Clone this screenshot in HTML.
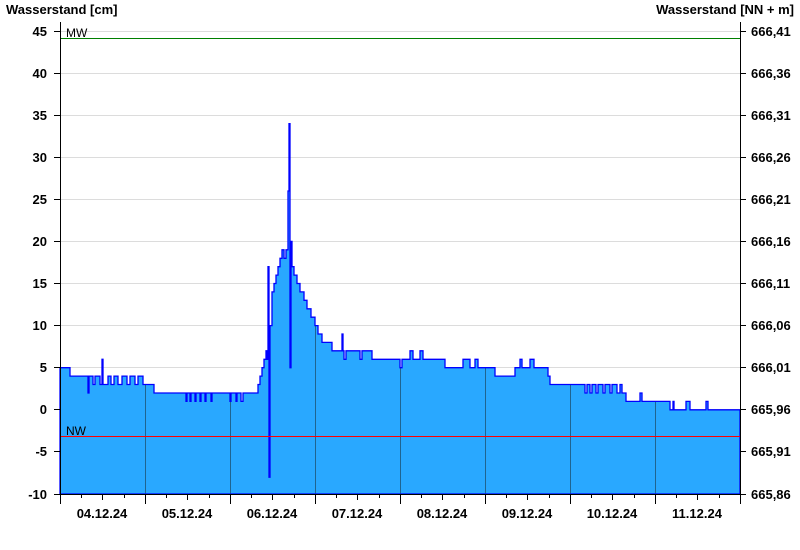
<!DOCTYPE html>
<html><head><meta charset="utf-8"><style>
html,body{margin:0;padding:0;background:#fff;width:800px;height:550px;overflow:hidden}
svg text{font-family:"Liberation Sans",Arial,sans-serif;font-weight:bold;font-size:13px;fill:#000}
</style></head><body>
<svg width="800" height="550" xmlns="http://www.w3.org/2000/svg">
<defs>
<clipPath id="c"><path id="dp" d="M60,494 V367.7 H70 V376.1 H88 V393 H89 V376.1 H93 V384.5 H95 V376.1 H100 V384.5 H102 V359.3 H103 V384.5 H108 V376.1 H111 V384.5 H114 V376.1 H118 V384.5 H122 V376.1 H127 V384.5 H130 V376.1 H135 V384.5 H138 V376.1 H143 V384.5 H154 V393 H186 V401.4 H187 V393 H190 V401.4 H191 V393 H195 V401.4 H196 V393 H200 V401.4 H201 V393 H205 V401.4 H206 V393 H211 V401.4 H212 V393 H230 V401.4 H231 V393 H236 V401.4 H237 V393 H241 V401.4 H243 V393 H258 V384.5 H260 V376.1 H262 V367.7 H264 V359.3 H266 V350.8 H267 V359.3 H268 V266.7 H269 V477.2 H270 V325.6 H272 V291.9 H274 V283.5 H276 V275.1 H278 V266.7 H280 V258.3 H282 V249.8 H284 V258.3 H286 V249.8 H288 V191 H289 V123.6 H290 V367.7 H291 V241.4 H292 V266.7 H294 V275.1 H297 V283.5 H300 V291.9 H304 V300.3 H307 V308.8 H311 V317.2 H315 V325.6 H318 V334 H322 V342.4 H332 V350.8 H342 V334 H343 V350.8 H344 V359.3 H346 V350.8 H360 V359.3 H362 V350.8 H372 V359.3 H400 V367.7 H402 V359.3 H410 V350.8 H413 V359.3 H420 V350.8 H423 V359.3 H445 V367.7 H463 V359.3 H470 V367.7 H475 V359.3 H478 V367.7 H495 V376.1 H515 V367.7 H520 V359.3 H522 V367.7 H530 V359.3 H534 V367.7 H548 V376.1 H550 V384.5 H585 V393 H587 V384.5 H590 V393 H592 V384.5 H596 V393 H598 V384.5 H603 V393 H605 V384.5 H610 V393 H612 V384.5 H617 V393 H620 V384.5 H622 V393 H626 V401.4 H638 V401.4 H640 V393 H642 V401.4 H670 V409.8 H673 V401.4 H674 V409.8 H686 V401.4 H690 V409.8 H706 V401.4 H708 V409.8 H740 V494 Z"/></clipPath>
</defs>
<text x="6" y="14">Wasserstand [cm]</text>
<text x="794" y="14" text-anchor="end">Wasserstand [NN + m]</text>
<g stroke="#dcdcdc" stroke-width="1">
<line x1="60" x2="740" y1="31.5" y2="31.5"/><line x1="60" x2="740" y1="73.5" y2="73.5"/><line x1="60" x2="740" y1="115.5" y2="115.5"/><line x1="60" x2="740" y1="157.5" y2="157.5"/><line x1="60" x2="740" y1="199.5" y2="199.5"/><line x1="60" x2="740" y1="241.5" y2="241.5"/><line x1="60" x2="740" y1="283.5" y2="283.5"/><line x1="60" x2="740" y1="325.5" y2="325.5"/><line x1="60" x2="740" y1="367.5" y2="367.5"/><line x1="60" x2="740" y1="409.5" y2="409.5"/><line x1="60" x2="740" y1="451.5" y2="451.5"/>
</g>
<use href="#dp" fill="#29a8ff"/>
<g clip-path="url(#c)" stroke="#1f6490" stroke-width="1">
<line x1="145.5" x2="145.5" y1="0" y2="494"/><line x1="230.5" x2="230.5" y1="0" y2="494"/><line x1="315.5" x2="315.5" y1="0" y2="494"/><line x1="400.5" x2="400.5" y1="0" y2="494"/><line x1="485.5" x2="485.5" y1="0" y2="494"/><line x1="570.5" x2="570.5" y1="0" y2="494"/><line x1="655.5" x2="655.5" y1="0" y2="494"/>
</g>
<use href="#dp" fill="none" stroke="#0000ff" stroke-width="1.3"/>
<line x1="60" x2="740" y1="38.5" y2="38.5" stroke="#008000" stroke-width="1"/>
<line x1="60" x2="740" y1="436.5" y2="436.5" stroke="#ff0000" stroke-width="1"/>
<text x="66" y="37" style="font-weight:normal;font-size:12px">MW</text>
<text x="66" y="435" style="font-weight:normal;font-size:12px">NW</text>
<g stroke="#000" stroke-width="1">
<line x1="60.5" x2="60.5" y1="22" y2="495"/><line x1="740.5" x2="740.5" y1="22" y2="495"/>
<line x1="60" x2="741" y1="494.5" y2="494.5"/>
</g>
<g stroke="#000" stroke-width="1">
<path d="M54,31.5H60M54,73.5H60M54,115.5H60M54,157.5H60M54,199.5H60M54,241.5H60M54,283.5H60M54,325.5H60M54,367.5H60M54,409.5H60M54,451.5H60M54,494.5H60"/>
<path d="M740,31.5H746M740,73.5H746M740,115.5H746M740,157.5H746M740,199.5H746M740,241.5H746M740,283.5H746M740,325.5H746M740,367.5H746M740,409.5H746M740,451.5H746M740,494.5H746"/>
<path d="M60.5,494V504M145.5,494V504M230.5,494V504M315.5,494V504M400.5,494V504M485.5,494V504M570.5,494V504M655.5,494V504M740.5,494V504"/>
<path d="M81.5,494V498M102.5,494V500M124.5,494V498M166.5,494V498M187.5,494V500M209.5,494V498M251.5,494V498M272.5,494V500M294.5,494V498M336.5,494V498M357.5,494V500M379.5,494V498M421.5,494V498M442.5,494V500M464.5,494V498M506.5,494V498M527.5,494V500M549.5,494V498M591.5,494V498M612.5,494V500M634.5,494V498M676.5,494V498M697.5,494V500M719.5,494V498"/>
</g>
<g text-anchor="end">
<text x="47" y="36">45</text><text x="47" y="78">40</text><text x="47" y="120">35</text><text x="47" y="162">30</text><text x="47" y="204">25</text><text x="47" y="246">20</text><text x="47" y="288">15</text><text x="47" y="330">10</text><text x="47" y="372">5</text><text x="47" y="414">0</text><text x="47" y="456">-5</text><text x="47" y="499">-10</text>
</g>
<g>
<text x="751" y="36">666,41</text><text x="751" y="78">666,36</text><text x="751" y="120">666,31</text><text x="751" y="162">666,26</text><text x="751" y="204">666,21</text><text x="751" y="246">666,16</text><text x="751" y="288">666,11</text><text x="751" y="330">666,06</text><text x="751" y="372">666,01</text><text x="751" y="414">665,96</text><text x="751" y="456">665,91</text><text x="751" y="499">665,86</text>
</g>
<g text-anchor="middle">
<text x="102" y="518">04.12.24</text><text x="187" y="518">05.12.24</text><text x="272" y="518">06.12.24</text><text x="357" y="518">07.12.24</text><text x="442" y="518">08.12.24</text><text x="527" y="518">09.12.24</text><text x="612" y="518">10.12.24</text><text x="697" y="518">11.12.24</text>
</g>
</svg>
</body></html>
